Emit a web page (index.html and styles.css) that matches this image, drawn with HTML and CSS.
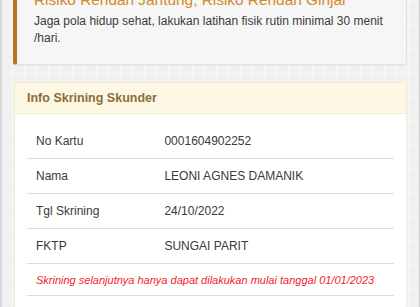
FILE: index.html
```html
<!DOCTYPE html>
<html lang="id">
<head>
<meta charset="utf-8">
<title>Info Skrining</title>
<link rel="stylesheet" href="styles.css">
</head>
<body>
<div class="page">
  <div class="callout">
    <h4 class="callout-title">Risiko Rendah Jantung, Risiko Rendah Ginjal</h4>
    <p class="callout-text">Jaga pola hidup sehat, lakukan latihan fisik rutin minimal 30 menit /hari.</p>
  </div>

  <div class="panel">
    <div class="panel-heading">Info Skrining Skunder</div>
    <div class="panel-body">
      <table class="info-table">
        <tbody>
          <tr><td class="label">No Kartu</td><td>0001604902252</td></tr>
          <tr><td class="label">Nama</td><td>LEONI AGNES DAMANIK</td></tr>
          <tr><td class="label">Tgl Skrining</td><td>24/10/2022</td></tr>
          <tr><td class="label">FKTP</td><td>SUNGAI PARIT</td></tr>
          <tr class="note-row"><td colspan="2" class="note">Skrining selanjutnya hanya dapat dilakukan mulai tanggal 01/01/2023</td></tr>
        </tbody>
      </table>
    </div>
  </div>
</div>
</body>
</html>
```

FILE: styles.css
```css
html, body {
  margin: 0;
  padding: 0;
}

body {
  font-family: "Liberation Sans", Arial, sans-serif;
  font-size: 12px;
  color: #333;
  background-color: #f1f1f1;
  background-image:
    linear-gradient(to right, rgba(255,255,255,0.4) 1px, transparent 1px),
    linear-gradient(to bottom, rgba(255,255,255,0.4) 1px, transparent 1px);
  background-size: 12px 12px;
  height: 307px;
  overflow: hidden;
  border-left: 2px solid #d9d9d9;
  border-right: 1px solid #c9c9c9;
  box-sizing: border-box;
}

.page {
  padding: 0 12px 0 11px;
}

.callout {
  margin-top: -10px;
  background: #f6f6f6;
  border: 1px solid #e2e2e2;
  border-left: 4px solid #b8741b;
  border-radius: 3px;
  padding: 0 17px 17px 17px;
  box-shadow: 0 1px 1px rgba(0,0,0,0.04);
}

.callout-title {
  margin: 0 0 5px 0;
  font-size: 15.4px;
  font-weight: normal;
  line-height: 17px;
  color: #d4892a;
}

.callout-text {
  margin: 0;
  font-size: 12px;
  line-height: 17px;
  color: #3a3a3a;
}

.panel {
  margin-top: 17px;
  margin-left: 1px;
  background: #fff;
  border: 1px solid #faebcc;
  border-radius: 3px;
}

.panel-heading {
  background: #fcf8e3;
  border-bottom: 1px solid #faebcc;
  color: #8a6d3b;
  font-weight: bold;
  font-size: 12.5px;
  line-height: 17px;
  padding: 7px 12px 6px 12px;
  border-radius: 3px 3px 0 0;
}

.panel-body {
  padding: 10px 12px 12px 12px;
}

.info-table {
  width: 100%;
  border-collapse: collapse;
}

.info-table td {
  padding: 9px 9px;
  line-height: 16px;
  font-size: 12px;
  color: #3a3a3a;
  border-top: 1px solid #dddddd;
  vertical-align: top;
}

.info-table tr:first-child td {
  border-top: 0;
}

.info-table td.label {
  width: 35%;
}

.info-table td.note {
  color: #f2232d;
  font-style: italic;
  font-size: 11px;
  padding: 8px 9px 7px 9px;
  border-bottom: 1px solid #dddddd;
}
```
